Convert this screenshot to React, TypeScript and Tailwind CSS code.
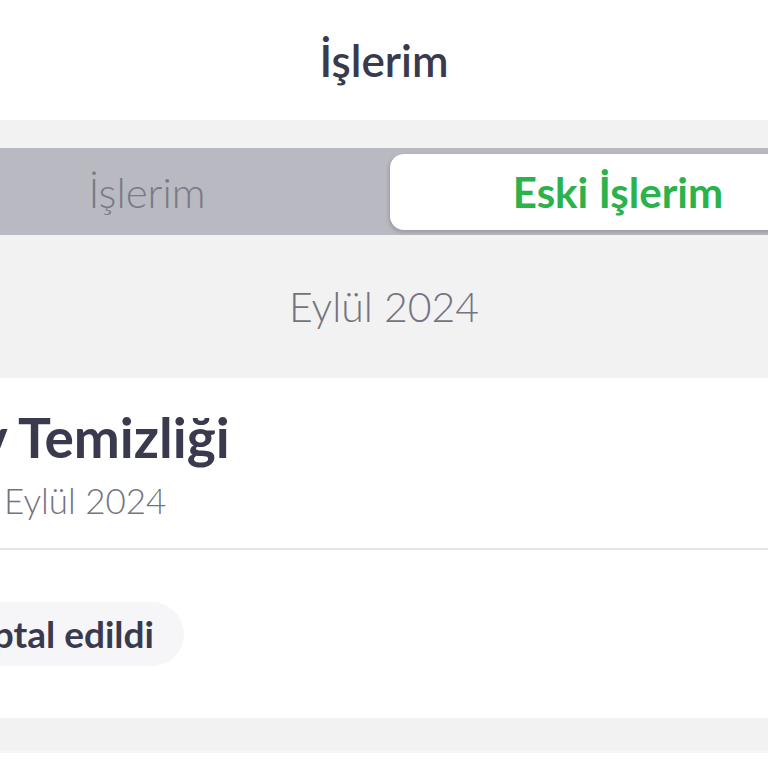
import React from "react";

const font = "font-['Lato','Noto_Sans',sans-serif]";

export default function App() {
  return (
    <div className={`${font} min-h-[768px] w-full overflow-hidden bg-white`}>
      {/* Header */}
      <header className="flex h-[120px] items-center justify-center bg-white">
        <h1 className="text-[44px] font-semibold leading-none text-[#393a4d]">
          İşlerim
        </h1>
      </header>

      {/* Tabs */}
      <div className="bg-[#f2f2f2] pt-[28px]">
        <div className="overflow-hidden">
          <div className="-ml-[72px] flex w-[924px] bg-[#b8b9c1] px-[6px] pt-[6px] pb-[5px]">
            <button
              type="button"
              className="flex h-[76px] w-[456px] shrink-0 items-center justify-center pr-[30px] text-[42px] font-light text-[#797a85]"
            >
              İşlerim
            </button>
            <button
              type="button"
              className="flex h-[76px] w-[456px] shrink-0 items-center justify-center rounded-[14px] bg-white text-[42px] font-bold text-[#2bb24c] shadow-[-1px_2px_4px_rgba(0,0,0,0.18)]"
            >
              Eski İşlerim
            </button>
          </div>
        </div>

        {/* Month heading */}
        <div className="flex h-[143px] items-center justify-center">
          <span className="text-[41px] font-light text-[#737480]">
            Eylül 2024
          </span>
        </div>
      </div>

      {/* Job card */}
      <article className="bg-white">
        <div className="flex h-[170px] flex-col pt-[29px]">
          <h2 className="-ml-[52px] text-[55px] font-bold leading-[60px] text-[#393a4d]">
            Ev Temizliği
          </h2>
          <p className="-ml-[46px] mt-[13px] text-[35px] font-light leading-[40px] text-[#73747f]">
            12 Eylül 2024
          </p>
        </div>
        <div className="h-[2px] bg-[#e4e4e6]" />
        <div className="flex h-[168px] items-center">
          <span className="-ml-[40px] inline-flex h-[64px] items-center rounded-full bg-[#f6f6f8] pl-[22px] pr-[30px] text-[37px] font-bold text-[#393a4d]">
            İptal edildi
          </span>
        </div>
      </article>

      <div className="h-[35px] border-b-2 border-[#f6f6f6] bg-[#f2f2f2]" />
    </div>
  );
}
